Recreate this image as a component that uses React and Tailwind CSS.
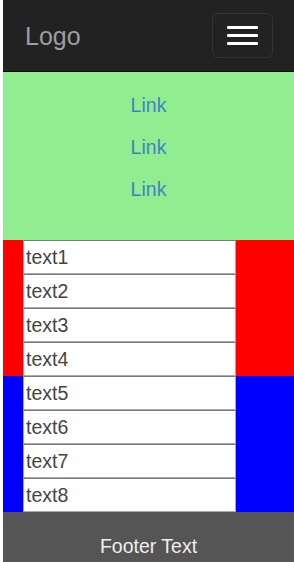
import React from 'react';

const redItems = ['text1', 'text2', 'text3', 'text4'];
const blueItems = ['text5', 'text6', 'text7', 'text8'];

function InputBlock({ items, color }) {
  return (
    <div className={`flex ${color}`}>
      <div className="w-[20px] shrink-0" />
      <div className="w-[213px] shrink-0 flex flex-col">
        {items.map((t) => (
          <input
            key={t}
            type="text"
            defaultValue={t}
            className="h-[34px] w-full bg-white border border-[#a9a9a9] border-t-[#7a7a7a] pl-[2px] text-[19.5px] text-[#444] outline-none"
          />
        ))}
      </div>
      <div className="flex-1" />
    </div>
  );
}

function App() {
  return (
    <div className="ml-[3px] font-['Liberation_Sans',Arial,sans-serif]">
      {/* Navbar */}
      <div className="h-[72px] bg-[#222] border-b border-[#080808] flex items-center justify-between pl-[22px] pr-[21px]">
        <span className="text-[25px] text-[#9d9d9d] mt-[3px]">Logo</span>
        <button className="w-[61px] h-[45px] border border-[#333] rounded-[6px] flex flex-col items-center justify-center gap-[5px]">
          <span className="block w-[31px] h-[3px] bg-white rounded-[1px]" />
          <span className="block w-[31px] h-[3px] bg-white rounded-[1px]" />
          <span className="block w-[31px] h-[3px] bg-white rounded-[1px]" />
        </button>
      </div>

      {/* Links */}
      <div className="bg-[#90ee90] pt-[13px] pb-[29px] flex flex-col">
        {[1, 2, 3].map((i) => (
          <a key={i} href="#" className="h-[42px] flex items-center justify-center text-[19.5px] text-[#3f84c1]">
            Link
          </a>
        ))}
      </div>

      {/* Inputs */}
      <InputBlock items={redItems} color="bg-[#ff0000]" />
      <InputBlock items={blueItems} color="bg-[#0000ff]" />

      {/* Footer */}
      <div className="bg-[#555] py-[22px] text-center text-[19.5px] leading-[24px] text-[#eee]">
        Footer Text
      </div>
    </div>
  );
}

export default App;
